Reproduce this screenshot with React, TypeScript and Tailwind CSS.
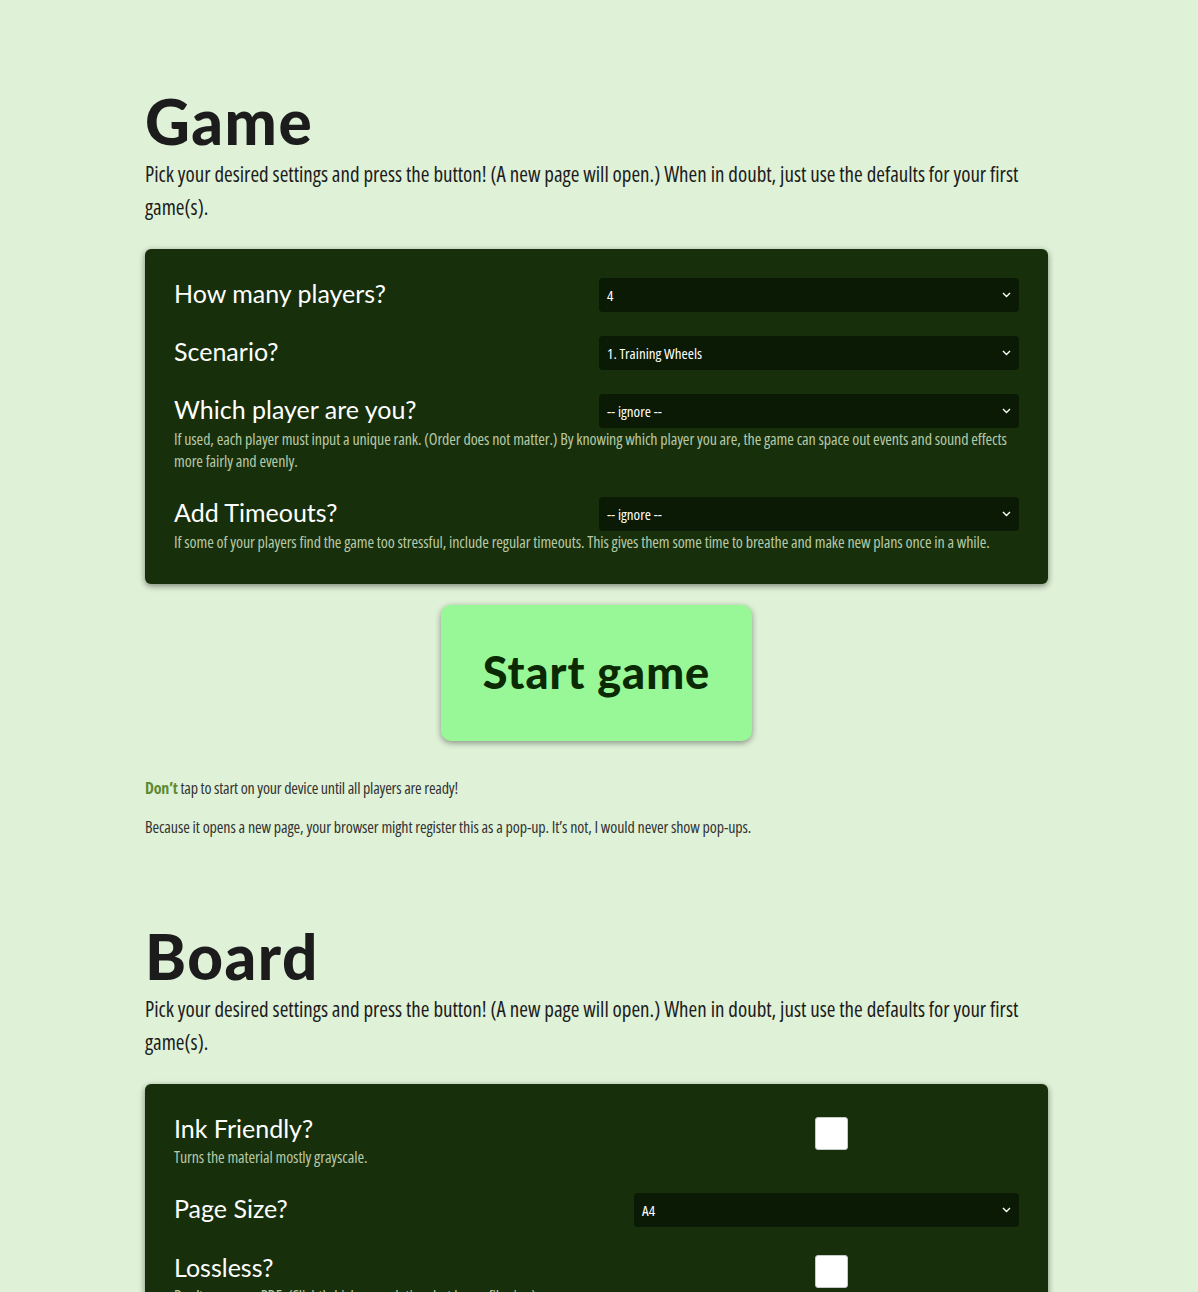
import React from "react";

const NARROW = "font-['Open_Sans',sans-serif] [font-stretch:75%]";
const HEAD = "font-['Lato','Inter',sans-serif]";

function Chevron() {
  return (
    <svg width="9" height="6" viewBox="0 0 9 6" fill="none" className="shrink-0">
      <path d="M1 1l3.5 3.5L8 1" stroke="#ffffff" strokeWidth="1.4" />
    </svg>
  );
}

function Select({ value, className = "" }: { value: string; className?: string }) {
  return (
    <div
      className={`flex h-[34px] items-center justify-between rounded-[4px] bg-[#0a1a04] pl-[8px] pr-[8px] text-white ${className}`}
    >
      <span className={`${NARROW} text-[15px]`}>{value}</span>
      <Chevron />
    </div>
  );
}

function Checkbox() {
  return <div className="h-[33px] w-[33px] rounded-[3px] border border-[#c8c8c8] bg-white" />;
}

function Label({ children }: { children: React.ReactNode }) {
  return <div className={`${HEAD} text-[25px] leading-[30px] text-white`}>{children}</div>;
}

function Desc({ children, className = "" }: { children: React.ReactNode; className?: string }) {
  return (
    <div className={`${NARROW} text-[16px] leading-[22px] tracking-[-0.1px] text-[#b7c9a8] ${className}`}>
      {children}
    </div>
  );
}

function Intro({ title }: { title: string }) {
  return (
    <>
      <h1 className={`${HEAD} text-[62px] font-black leading-[62px] tracking-[1.5px] text-[#1c1c1c]`}>{title}</h1>
      <p className={`${NARROW} mt-[6px] text-[21px] leading-[33px] text-[#1c1c1c]`}>
        Pick your desired settings and press the button! (A new page will open.) When in doubt, just use the defaults
        for your first game(s).
      </p>
    </>
  );
}

function SelectRow({ label, value }: { label: string; value: string }) {
  return (
    <div className="flex items-center">
      <div className="w-[425px] pb-[4px]">
        <Label>{label}</Label>
      </div>
      <Select value={value} className="w-[420px]" />
    </div>
  );
}

export default function App() {
  return (
    <div className="min-h-screen bg-[#dff1d7] pb-[40px] pt-[90px]">
      <div className="ml-[145px] w-[903px]">
        <Intro title="Game" />

        <div className="mt-[25px] rounded-[6px] bg-[#17300b] px-[29px] pb-[31px] pt-[29px] shadow-[0_2px_6px_rgba(0,0,0,0.45)]">
          <div className="flex flex-col gap-[24px]">
            <SelectRow label="How many players?" value="4" />
            <SelectRow label="Scenario?" value="1. Training Wheels" />
            <div>
              <SelectRow label="Which player are you?" value="-- ignore --" />
              <Desc>
                If used, each player must input a unique rank. (Order does not matter.) By knowing which player you are,
                the game can space out events and sound effects more fairly and evenly.
              </Desc>
            </div>
            <div className="mt-[1px]">
              <SelectRow label="Add Timeouts?" value="-- ignore --" />
              <Desc>
                If some of your players find the game too stressful, include regular timeouts. This gives them some time
                to breathe and make new plans once in a while.
              </Desc>
            </div>
          </div>
        </div>

        <div className="mt-[21px] flex justify-center">
          <button className="flex h-[136px] w-[311px] items-center justify-center rounded-[10px] bg-[#98f898] shadow-[0_2px_6px_rgba(0,0,0,0.4)]">
            <span className={`${HEAD} text-[45px] font-black tracking-[1px] text-[#0b2a04]`}>Start game</span>
          </button>
        </div>

        <p className={`${NARROW} mt-[36px] text-[16px] leading-[22px] tracking-[-0.2px] text-[#333333]`}>
          <span className="font-bold text-[#5e8a33]">Don’t</span> tap to start on your device until all players are ready!
        </p>
        <p className={`${NARROW} mt-[17px] text-[16px] leading-[22px] tracking-[-0.1px] text-[#333333]`}>
          Because it opens a new page, your browser might register this as a pop-up. It’s not, I would never show pop-ups.
        </p>

        <div className="mt-[87px]">
          <Intro title="Board" />
        </div>

        <div className="mt-[25px] rounded-[6px] bg-[#17300b] px-[29px] pb-[31px] pt-[29px] shadow-[0_2px_6px_rgba(0,0,0,0.45)]">
          <div className="flex flex-col gap-[25px]">
            <div className="flex items-start">
              <div className="w-[460px]">
                <Label>Ink Friendly?</Label>
                <Desc className="mt-[3px]">Turns the material mostly grayscale.</Desc>
              </div>
              <div className="flex w-[385px] justify-center pl-[10px] pt-[4px]">
                <Checkbox />
              </div>
            </div>
            <div className="flex items-center">
              <div className="w-[460px] pb-[4px]">
                <Label>Page Size?</Label>
              </div>
              <Select value="A4" className="w-[385px]" />
            </div>
            <div className="flex items-start">
              <div className="w-[460px]">
                <Label>Lossless?</Label>
                <Desc className="mt-[3px]">Don’t compress PDF. (Slightly higher resolution, but larger file size.)</Desc>
              </div>
              <div className="flex w-[385px] justify-center pl-[10px] pt-[3px]">
                <Checkbox />
              </div>
            </div>
          </div>
        </div>
      </div>
    </div>
  );
}
